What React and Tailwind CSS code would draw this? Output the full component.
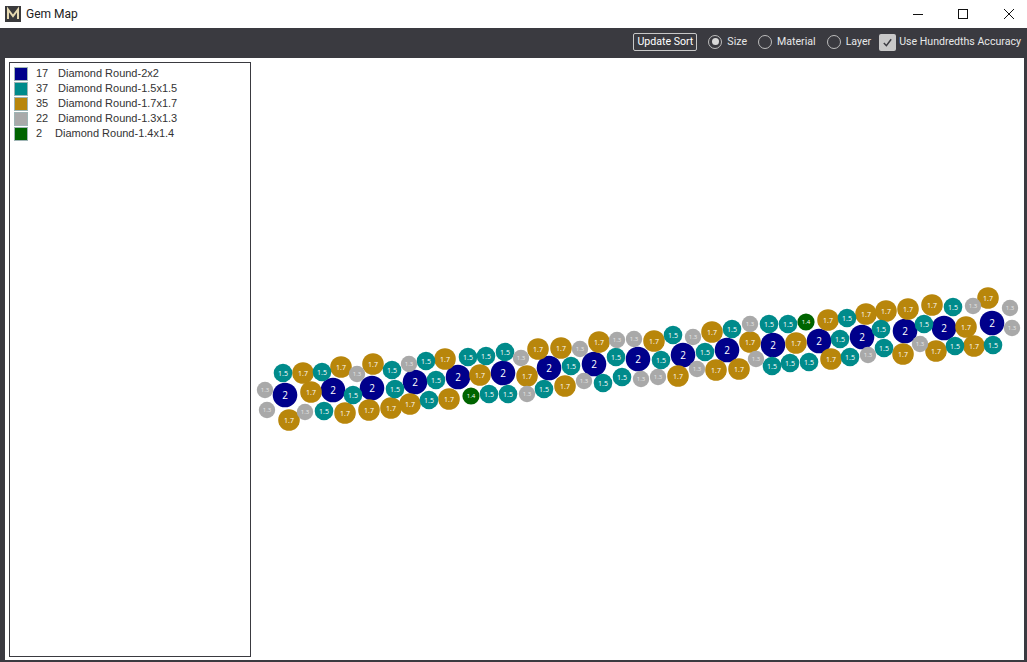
const legend = [
  { color: "bg-[#00008b]", count: 17, name: "Diamond Round-2x2" },
  { color: "bg-[#008b8b]", count: 37, name: "Diamond Round-1.5x1.5" },
  { color: "bg-[#b8860b]", count: 35, name: "Diamond Round-1.7x1.7" },
  { color: "bg-[#a9a9a9]", count: 22, name: "Diamond Round-1.3x1.3" },
  { color: "bg-[#006400]", count: 2, name: "Diamond Round-1.4x1.4", short: true },
];

const sizes = {
  2: { r: 12.3, fill: "#00008b", font: 10, label: "2" },
  1.7: { r: 10.8, fill: "#b8860b", font: 7, label: "1.7" },
  1.5: { r: 9.3, fill: "#008b8b", font: 7, label: "1.5" },
  1.4: { r: 8.6, fill: "#006400", font: 6, label: "1.4" },
  1.3: { r: 8.2, fill: "#a9a9a9", font: 6, label: "1.3" },
};

// gem centres read off the reference, [x, y]
const gems = {
  2: [
    [285, 395], [333, 390], [372, 388], [415, 382], [458, 377], [503, 373],
    [549, 368], [594, 364], [638, 359], [683, 355], [727, 350], [773, 345],
    [819, 341], [862, 337], [905, 331], [944, 328], [992, 323],
  ],
  1.7: [
    [303, 373], [341, 367], [373, 364], [311, 392], [289, 420], [345, 413],
    [369, 410], [391, 408], [410, 404], [449, 399], [445, 359], [480, 375],
    [527, 376], [538, 349], [561, 348], [565, 386], [599, 342], [654, 341],
    [678, 376], [712, 332], [716, 370], [739, 369], [750, 342], [796, 343],
    [828, 320], [831, 359], [866, 314], [886, 311], [908, 309], [903, 354],
    [932, 305], [936, 351], [966, 327], [974, 346], [988, 298],
  ],
  1.5: [
    [283, 373], [322, 372], [353, 395], [324, 411], [392, 370], [395, 389],
    [426, 361], [436, 380], [429, 400], [468, 357], [486, 356], [505, 352],
    [489, 394], [508, 394], [544, 389], [571, 366], [603, 383], [616, 357],
    [622, 377], [661, 360], [673, 335], [705, 352], [732, 329], [769, 324],
    [788, 324], [772, 366], [790, 363], [809, 362], [840, 339], [847, 318],
    [850, 357], [881, 329], [884, 348], [924, 324], [953, 307], [955, 346],
    [993, 345],
  ],
  1.4: [[471, 396], [806, 322]],
  1.3: [
    [265, 390], [267, 410], [305, 412], [357, 374], [409, 364], [521, 358],
    [527, 394], [580, 349], [584, 381], [617, 340], [634, 339], [641, 379],
    [658, 377], [693, 337], [697, 369], [750, 324], [756, 359], [868, 355],
    [920, 344], [973, 306], [1010, 308], [1012, 328],
  ],
};

function Radio({ label, checked }) {
  return (
    <label className="flex items-center gap-[5px]">
      <span className="w-[14px] h-[14px] rounded-full border border-[#bdbdbd] flex items-center justify-center">
        {checked && <span className="w-[7px] h-[7px] rounded-full bg-[#d8d8d8]" />}
      </span>
      <span>{label}</span>
    </label>
  );
}

function GemCanvas() {
  return (
    <svg viewBox="251 58 773 602" className="w-[773px] h-[602px] block">
      {Object.entries(gems).map(([size, points]) => {
        const gem = sizes[size];
        return points.map(([x, y]) => (
          <g key={`${x}-${y}`}>
            <circle cx={x} cy={y} r={gem.r} fill={gem.fill} />
            <text
              x={x}
              y={y + gem.font * 0.36}
              textAnchor="middle"
              fontSize={gem.font}
              fontFamily="'Open Sans', sans-serif"
              fill={size === "1.3" ? "#e6e6e6" : "#ffffff"}
            >
              {gem.label}
            </text>
          </g>
        ));
      })}
    </svg>
  );
}

export default function App() {
  return (
    <div className="w-[1027px] h-[662px] flex flex-col overflow-hidden bg-[#3a3a40] font-['Roboto',sans-serif]">
      {/* Title bar */}
      <div className="h-[28px] bg-white flex items-center text-[#222] text-[12px] shrink-0">
        <svg viewBox="0 0 16 16" className="w-[16px] h-[16px] ml-[5px] mr-[5px]">
          <rect width="16" height="16" fill="#3a3a3c" />
          <path d="M3 13V3.5L8 10l5-6.5V13" fill="none" stroke="#e6d9b0" strokeWidth="2" />
        </svg>
        <span>Gem Map</span>
        <div className="ml-auto flex items-center">
          <svg viewBox="0 0 10 10" className="w-[10px] h-[10px] mr-[35px]">
            <path d="M0 5.5h10" stroke="#111" fill="none" />
          </svg>
          <svg viewBox="0 0 10 10" className="w-[10px] h-[10px] mr-[36px]">
            <rect x="0.5" y="0.5" width="9" height="9" stroke="#111" fill="none" />
          </svg>
          <svg viewBox="0 0 10 10" className="w-[10px] h-[10px] mr-[13px]">
            <path d="M0 0l10 10M10 0L0 10" stroke="#111" fill="none" />
          </svg>
        </div>
      </div>

      {/* Toolbar */}
      <div className="h-[30px] shrink-0 flex items-center justify-end gap-[11px] pr-[6px] pb-[2px] text-[#e8e8e8] text-[10.6px]">
        <button className="h-[18px] w-[64px] border border-[#c8c8c8] rounded-[2px] text-white text-[10.6px] leading-none">
          Update Sort
        </button>
        <Radio label="Size" checked />
        <Radio label="Material" />
        <Radio label="Layer" />
        <label className="flex items-center gap-[3px] ml-[-3px]">
          <span className="w-[17px] h-[17px] rounded-[2px] bg-[#c8c8c8] flex items-center justify-center">
            <svg viewBox="0 0 12 12" className="w-[11px] h-[11px]">
              <path d="M2 6.5l2.8 3L10 2.5" fill="none" stroke="#3a3a40" strokeWidth="1.6" />
            </svg>
          </span>
          <span>Use Hundredths Accuracy</span>
        </label>
      </div>

      {/* Body */}
      <div className="flex-1 flex bg-white ml-[5px] mr-[3px] mb-[2px] min-h-0">
        <div className="w-[242px] mt-[4px] mb-[3px] ml-[4px] border border-[#3a3a40] pl-[4px] pt-[3px] text-[#333] text-[11px] font-['Liberation_Sans',sans-serif] shrink-0">
          {legend.map((item) => (
            <div key={item.name} className="flex items-center h-[15px]">
              <span className={`w-[14px] h-[14px] ${item.color} border border-[#9fb5b5] shrink-0`} />
              <span className={`ml-[8px] ${item.short ? "w-[19px]" : "w-[22px]"}`}>{item.count}</span>
              <span>{item.name}</span>
            </div>
          ))}
        </div>
        <GemCanvas />
      </div>
    </div>
  );
}
